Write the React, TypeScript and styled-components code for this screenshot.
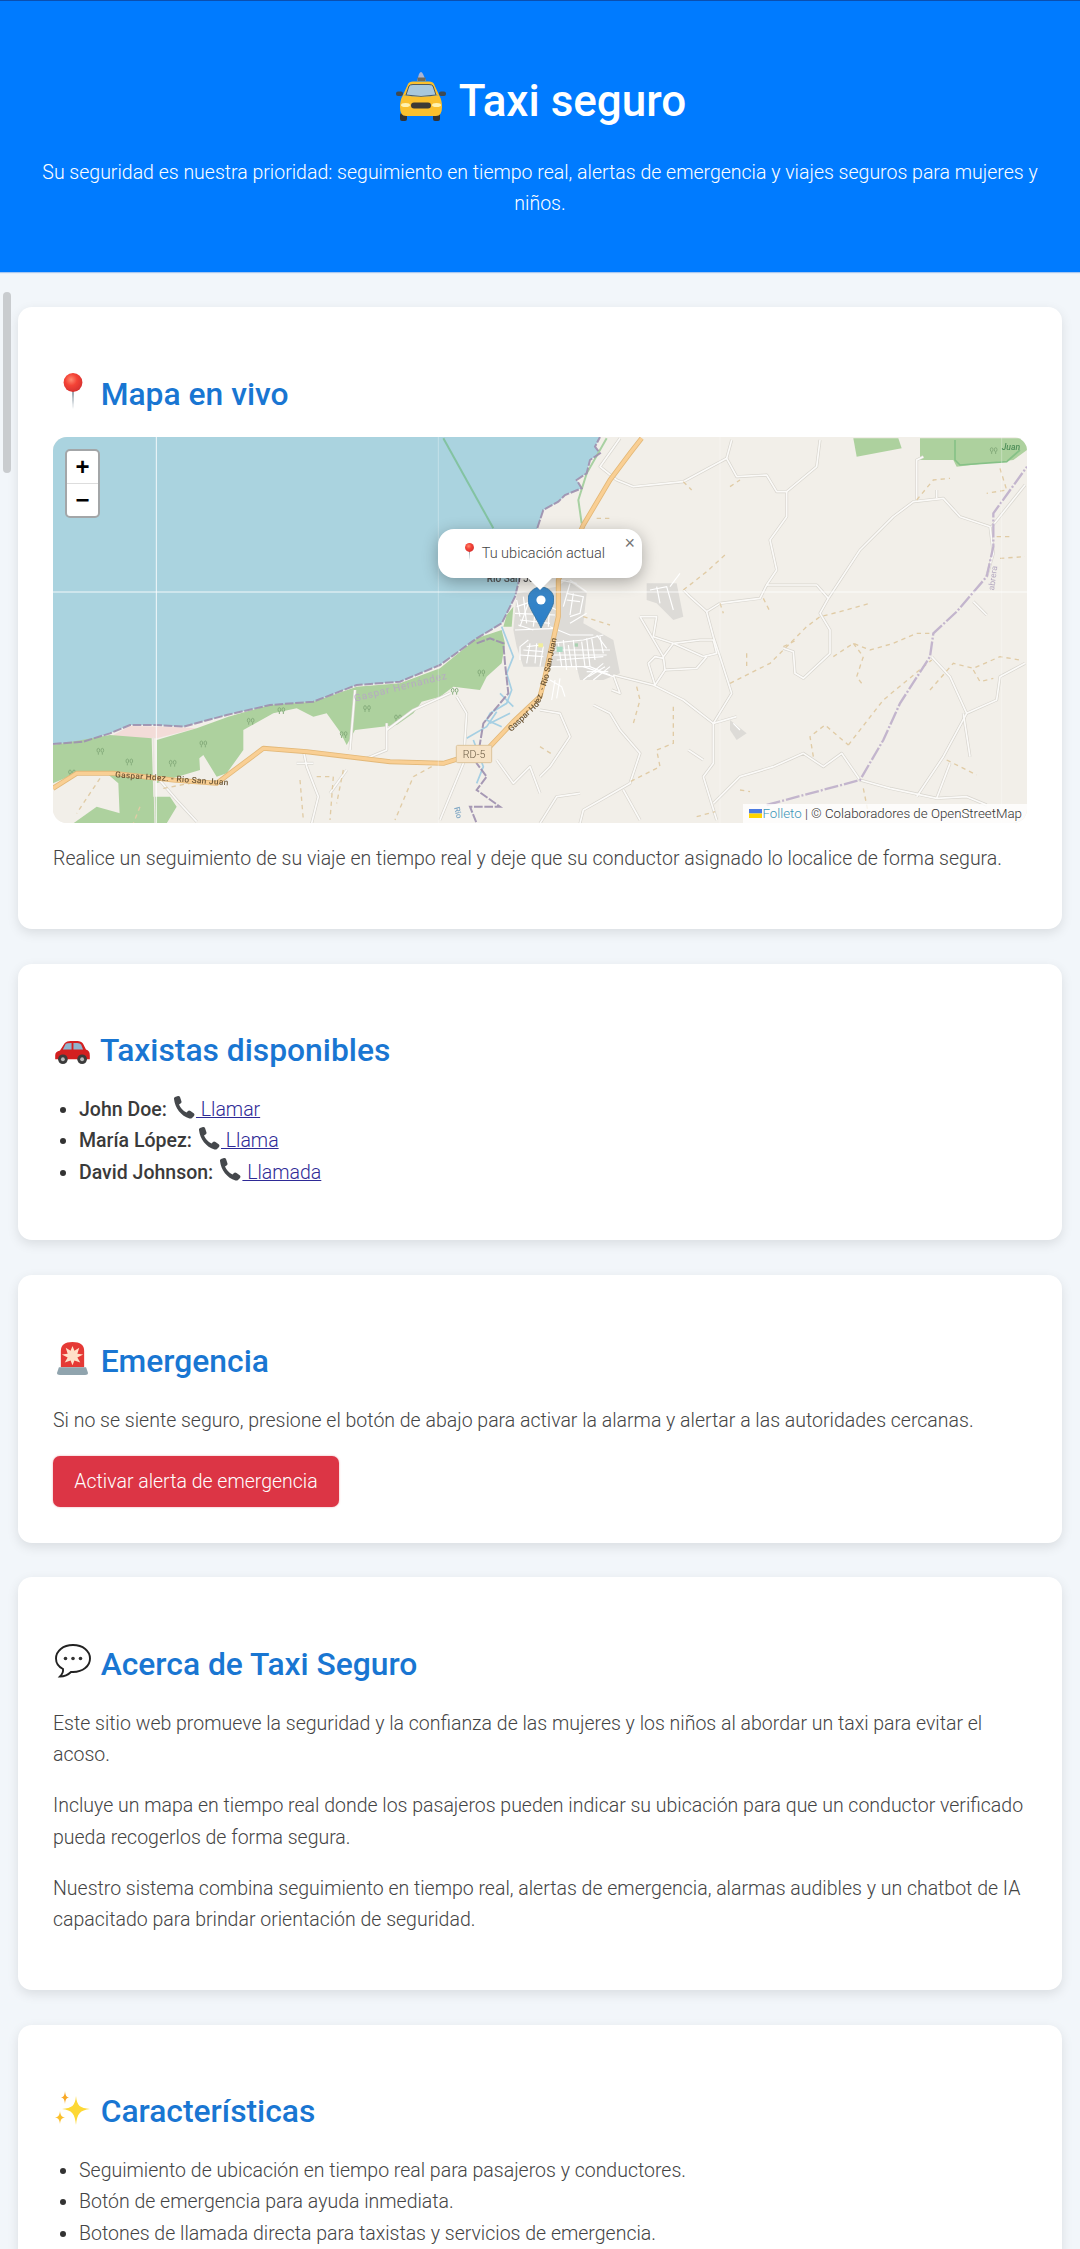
import React from "react";
import styled, { createGlobalStyle } from "styled-components";

const Global = createGlobalStyle`
  html, body { margin: 0; padding: 0; height: 2249px; overflow: hidden; background: #f2f6fa; }
  body { font-family: Roboto, "Liberation Sans", sans-serif; font-size: 19.5px; line-height: 31.4px; color: #555; font-weight: 300; }
  * { box-sizing: border-box; }
`;

const Page = styled.div`position: relative; width: 1080px; height: 2249px; overflow: hidden;`;
const Scrollbar = styled.div`position: absolute; left: 3px; top: 292px; width: 8px; height: 181px; border-radius: 4px; background: #c9cccf;`;
const Header = styled.header`
  height: 272px; background: #007bff; border-top: 1px solid #0a4fb0; color: #fff; text-align: center;
  padding: 72.5px 36px 0; box-shadow: 0 1px 1px rgba(120,170,235,.6);
`;
const Title = styled.h1`margin: 0 0 29px; font-size: 44px; line-height: 54px; font-weight: 500;`;
const Sub = styled.p`margin: 0; font-weight: 300; color: #fff;`;
const Main = styled.main`padding: 35px 18px 0; display: flex; flex-direction: column; gap: 34.6px;`;
const Card = styled.section`
  background: #fff; border-radius: 14px; padding: 35px; box-shadow: 0 4px 12px rgba(0,0,0,.1);
`;
const CardHeading = styled.h2`
  margin: 28.5px 0 19.9px; font-size: 31.8px; line-height: 47px; font-weight: 500; color: #1976d2;
`;
const Para = styled.p`margin: 0 0 19.6px; font-weight: 300; color: #444;`;
const MapBox = styled.div`position: relative; height: 386px; margin-bottom: 19.6px; border-radius: 14px; overflow: hidden; background: #f2efe9;`;
const MapArt = styled.svg`display: block; width: 974px; height: 386px; filter: blur(.7px);`;
const Zoom = styled.div`
  position: absolute; left: 12px; top: 12px; width: 35px; height: 69px; border: 2px solid #a3a6a8; border-radius: 5px;
  background: #fff; display: grid; grid-template-rows: 1fr 1fr;
`;
const ZoomBtn = styled.div<{ $first?: boolean }>`
  display: flex; align-items: center; justify-content: center; color: #000; font: 700 24px/1 "Liberation Sans", sans-serif;
  border-bottom: ${(p) => (p.$first ? "1px solid #ddd" : "0")};
`;
const Attribution = styled.div`
  position: absolute; right: 0; bottom: 0; height: 19px; padding: 0 5px 0 6px; background: rgba(255,255,255,.8);
  font-size: 13.3px; line-height: 19px; font-weight: 300; color: #333; display: flex; align-items: center; white-space: pre;
`;
const Flag = styled.svg`width: 13px; height: 9px; display: block;`;
const AttrLink = styled.span`color: #3a95b8;`;
const Popup = styled.div`
  position: absolute; left: 385px; top: 92px; width: 204px; height: 49px; background: #fff; border-radius: 16px;
  box-shadow: 0 4px 16px rgba(0,0,0,.3); font-size: 14.5px; line-height: 49px; color: #444; font-weight: 300; white-space: pre; padding-left: 23px;
  &::after { content: ""; position: absolute; left: 90px; top: 49px; border: 12.5px solid transparent; border-top-color: #fff; border-bottom: 0; }
`;
const Close = styled.span`position: absolute; right: 7px; top: 3px; font: 400 18px/22px "Liberation Sans", sans-serif; color: #757575;`;
const Marker = styled.svg`position: absolute; left: 475px; top: 150px; width: 26px; height: 41px; filter: blur(.3px);`;
const List = styled.ul`margin: 0 0 17px; padding: 0 0 0 26px;`;
const Item = styled.li<{ $strong?: boolean }>`
  color: ${(p) => (p.$strong ? "#333" : "#444")}; font-weight: 300;
  &::marker { color: #333; }
`;
const Name = styled.span`font-weight: 500; color: #3a3a3a;`;
const CallLink = styled.a`color: #2e2a96; text-decoration: underline; font-weight: 300;`;
const AlertButton = styled.button`
  display: block; height: 50.6px; width: 286px; margin: .4px 0 1px; padding: 0; border: 0; border-radius: 7px; background: #dc3545; color: #fff; font: 300 19.5px Roboto, sans-serif;
  box-shadow: 0 0 2px rgba(220,53,69,.5);
`;
const Glyph = styled.span<{ $w?: number }>`
  display: inline-flex; justify-content: center; width: ${(p) => p.$w ?? 1.25}em; height: 1em; vertical-align: -0.13em;
  & svg { display: block; flex: none; overflow: visible; }
`;

const Pin = ({ s = 36, id = "pb", up = 0 }: { s?: number; id?: string; up?: number }) => (
  <svg width={s} height={s} viewBox="0 0 36 36" style={{ marginTop: `${up}px` }}>
    <path d="M17 17 L18 36 L19 17Z" fill="#8a9aa5" />
    <defs><radialGradient id={id} cx=".4" cy=".35" r=".7"><stop offset="0" stopColor="#ff8a70" /><stop offset=".45" stopColor="#f44336" /><stop offset="1" stopColor="#d32f2f" /></radialGradient></defs>
    <circle cx="18" cy="9.5" r="9.4" fill={`url(#${id})`} />
  </svg>
);
const Taxi = () => (
  <svg width="50" height="50" viewBox="0 0 50 50" style={{ marginTop: "-5px" }}>
    <path d="M21 10 L23 3 Q25 -1 27 3 L30 10Z" fill="#a9b5d6" />
    <rect x="21.5" y="6.5" width="8" height="3.5" fill="#6f6a5a" />
    <path d="M12 13 Q13 10.5 17 10.5 L33 10.5 Q37 10.5 38 13 L43 24 L7 24Z" fill="#fbc02d" />
    <path d="M13 15 Q14 13.5 17 13.5 L33 13.5 Q36 13.5 37 15 L40 24 Q25 27 10 24Z" fill="#a9c8dc" stroke="#3f4f5c" strokeWidth=".9" />
    <rect x="0" y="20.5" width="7" height="4.5" rx="2" fill="#3f4a52" /><rect x="43" y="20.5" width="7" height="4.5" rx="2" fill="#3f4a52" />
    <rect x="4" y="42" width="7" height="8" rx="2" fill="#333" /><rect x="37" y="42" width="7" height="8" rx="2" fill="#333" />
    <path d="M7 24 Q25 27.5 43 24 Q46 29 46 36 Q46 45 40 45 L10 45 Q4 45 4 36 Q4 29 7 24Z" fill="#fbc02d" />
    <rect x="15" y="31.5" width="20" height="6" rx="3" fill="#3c3a36" />
    <ellipse cx="9.5" cy="34" rx="4.5" ry="2" fill="#fff2b0" /><ellipse cx="40.5" cy="34" rx="4.5" ry="2" fill="#fff2b0" />
  </svg>
);
const Car = () => (
  <svg width="37" height="25" viewBox="0 0 38 26" style={{ marginTop: "6px" }}>
    <path d="M1 16 Q1 12 6 11 L11 3 Q13 1 17 1 L24 1 Q28 1 30 4 L33 10 Q37 11 37 16 L37 20 L1 20Z" fill="#d32020" />
    <path d="M12 4 Q13 3 18 3 L18 10 L9 10Z" fill="#90b4cd" /><path d="M20 3 L24 3 Q27 3 28 5 L30 10 L20 10Z" fill="#90b4cd" />
    <circle cx="9" cy="20" r="5" fill="#3b3b3b" /><circle cx="9" cy="20" r="2" fill="#bbb" /><circle cx="29" cy="20" r="5" fill="#3b3b3b" /><circle cx="29" cy="20" r="2" fill="#bbb" />
  </svg>
);
const Siren = () => (
  <svg width="33" height="35" viewBox="0 0 34 36" style={{ marginTop: "-1px" }}>
    <path d="M5 27 L5 10 Q5 1 17 1 Q29 1 29 10 L29 27Z" fill="#e53935" />
    <path d="M17 5 L19 10 L24 7 L22 13 L28 14 L22 17 L25 22 L19 20 L17 25 L15 20 L9 22 L12 17 L6 14 L12 13 L10 7 L15 10Z" fill="#ffe0c8" />
    <path d="M3 27 L31 27 L33 33 Q33 35 30 35 L4 35 Q1 35 1 33Z" fill="#90a4ae" />
  </svg>
);
const Bubble = () => (
  <svg width="38" height="36" viewBox="0 0 38 36" style={{ marginTop: "0px" }}>
    <path d="M19 2 C9 2 2 8 2 15.5 C2 20 5 24 9 26 C9.5 29 8 31.5 6 33.5 C11 33.5 15 31 17 29 C18 29 18.5 29 19 29 C29 29 36 23 36 15.5 C36 8 29 2 19 2Z" fill="#fff" stroke="#222" strokeWidth="1.9" />
    <circle cx="11.5" cy="15.5" r="1.8" fill="#333" /><circle cx="19" cy="15.5" r="1.8" fill="#333" /><circle cx="26.5" cy="15.5" r="1.8" fill="#333" />
  </svg>
);
const Sparkles = () => (
  <svg width="38" height="36" viewBox="0 0 38 36" style={{ marginTop: "-1px" }}>
    <path d="M22 6 C23 16 26 18 36 19 C26 20 23 24 22 35 C21 24 18 20 8 19 C18 18 21 16 22 6Z" fill="#fdd835" />
    <path d="M11 1 C11.5 6 12.5 7 15 7.5 C12.5 8 11.5 9 11 14 C10.5 9 9.5 8 7 7.5 C9.5 7 10.5 6 11 1Z" fill="#f9a825" />
    <path d="M6 21 C6.5 26 8 27 11 27.5 C8 28 6.5 29 6 34 C5.5 29 4 28 1 27.5 C4 27 5.5 26 6 21Z" fill="#fbc02d" />
  </svg>
);
const Phone = () => (
  <svg width="24" height="24" viewBox="0 0 24 24" style={{ marginTop: "-1px" }}>
    <path d="M2 4 Q1.5 3 3 2 L6 1 Q7.5 .8 8 2 L9.5 6.5 Q9.7 8 8.5 8.5 L7 9.5 Q9 14.5 14.5 17.5 L16 16 Q17 15 18.5 16 L22 18.5 Q23 19.5 22 21 L20 23 Q19 23.8 17.5 23.5 C9 21 3 13 2 4Z" fill="#45484c" />
  </svg>
);

type Line = number[];
const toPath = (a: Line, dx = 0, dy = 0) => "M" + a.reduce<string[]>((o, v, i) => { if (i % 2 === 0) o.push(`${v + dx} ${a[i + 1] + dy}`); return o; }, []).join(" L");

const roadsZ3: Line[] = [
  [230,150,280,170,430,155,560,85,590,140,680,135,710,185,740,185,830,110,840,30],[560,85,575,30],[230,150,180,110,240,25],
  [740,185,740,260,690,330,710,420,680,465,660,505,540,520,500,545,450,500,430,480],
  [680,465,830,465,865,505,840,550,870,600,870,670,790,745,765,730,760,665,730,655],
  [865,505,960,360,1060,260,1120,215,1210,205,1260,260,1350,290,1360,370,1340,440],
  [500,545,520,620,540,680,575,790,520,880,520,1000,490,1040,530,1170],
  [220,735,340,765,430,810,520,880,590,860],[220,735,240,790,215,780],
  [300,560,350,560,340,620,400,640,480,630,520,630,530,670,490,680,400,640,370,680,375,720,345,765,325,700,345,680,370,685],[300,560,370,680],[375,720,470,715,500,680],
  [520,1120,600,1040,700,1010,790,970,850,1010,905,970,960,1050,1050,1075,1190,1105,1280,1100,1340,1125],
  [1175,680,1230,740,1280,850,1370,810,1380,740,1455,700],[1280,850,1210,980,1130,1100],[1190,1105,1230,1000],[1270,850,1290,980],
  [1130,210,1130,90,1150,80],[1190,180,1190,205],[1300,515,1340,555],[1355,290,1455,165],
  [160,825,210,850,240,900,300,970,270,1060,200,1100,130,1140,120,1180],[0,840,60,850,90,920,30,1010,0,1040],[445,960,490,990],[0,1180,50,1100,120,1090],[300,1170,250,1080],
];
const roadsZ2: Line[] = [
  [1250,800,1280,850,1270,1000,1200,1170],[1040,880,1040,960,980,985],[1230,790,1120,840,1040,900],[945,780,930,960],
  [770,1000,820,1000],[920,1020,870,1090],[350,1040,410,1110,470,1175],[1370,990,1420,1060,1470,1010,1500,1090],
  [790,960,800,1010,835,1100,815,1180],
];
const tracksZ3: Line[] = [
  [430,480,500,425,560,370],[430,155,455,180],[570,170,600,150],[540,520,550,550],[670,505,690,545],[1130,210,1180,150,1230,145],
  [570,760,690,700,800,590,840,560,900,545,990,520],[620,670,620,720],[730,650,770,630],[880,680,940,640,990,660,1060,640,1130,610,1180,610],
  [940,640,970,680,950,740,965,760],[1170,780,1240,700,1300,715,1380,680,1440,690],[820,980,810,920,855,885,925,945],[925,945,1030,810,1175,690],
  [1220,990,1310,1035],[290,770,300,810,280,880],[400,830,400,940,350,960,360,1010,270,1055],[1380,115,1400,180,1340,190],[1370,320,1410,320],[1380,385,1455,380],
  [1300,720,1320,755,1360,745],[170,265,215,265],[130,560,210,585],[0,950,40,975],[970,1075,985,1150],[470,1160,525,1145],[600,1080,630,1085],
];
const tracksZ2: Line[] = [
  [180,1045,110,1150],[830,1040,880,1040,870,1170],[1175,1010,1120,1040,1065,1170],[370,1075,450,1060],[780,1050,790,1170],[300,1130,280,1180],[910,1020,890,1120],
];
const townStreets: Line[] = [
  [140,140,200,120,260,150],[150,180,240,190],[135,210,260,205],[200,120,190,200],[160,110,170,190],[240,120,235,200],[290,100,340,110,330,160,300,170],[300,70,280,140],
  [150,285,220,290],[180,250,170,310],[200,250,195,310],[220,260,210,320],[240,250,340,240,400,225],[250,270,420,270],[260,300,400,290],[280,240,290,330],[310,240,320,330],[350,235,360,320],[380,225,410,265],
  [230,320,360,320,420,345],[340,360,400,310],[370,360,420,320],[340,320,430,350],[240,360,275,380,285,410],[255,360,245,420],[270,355,260,415],[300,190,350,160],[240,200,300,225,370,225],[150,300,150,260,175,240],
  [140,120,150,170],[180,115,150,200],[215,130,215,195],[135,160,255,165],[145,195,190,210],[170,260,215,255],[160,270,220,275],[245,285,410,285],[265,250,275,320],[295,255,305,320],[335,245,345,320],[365,235,375,300],[390,230,400,280],[350,335,415,335],[355,350,405,320],
  [290,120,330,125],[310,100,300,165],[270,60,320,70],[350,95,300,60],
];
const treesZ: number[][] = [[175,960],[262,992],[392,996],[90,1025],[484,938],[626,870],[718,838],[975,832],[1068,860],[905,910],[1318,725],[1238,780],[2855,58]];
const northCoast = "L1440 440 L1490 300 L1510 240 L1555 215 L1575 195 L1625 175 L1610 150 L1640 130 L1650 90 L1680 70 L1665 50 L1680 21";

const MapDrawing = () => (
  <MapArt viewBox="39 21 2922 1158" preserveAspectRatio="none" aria-hidden>
    <rect x="39" y="21" width="2922" height="1158" fill="#f2efe9" />
    <path d={`M39 21 L39 942 L130 935 L210 910 L270 885 L350 885 L430 890 L560 855 L690 825 L820 815 L950 765 L1080 755 L1200 705 L1310 625 L1385 580 L1425 500 ${northCoast}Z`} fill="#aad3df" />
    <path d="M220 915 L270 888 L420 892 L470 895 L350 925 L230 925Z" fill="#f3dcd8" />
    <g fill="#add19e">
      <path d="M39 945 L210 915 L335 925 L340 1100 L390 1100 L410 1130 L380 1180 L240 1180 L235 1060 L200 1030 L110 1030 L39 1060Z" />
      <path d="M100 1180 L170 1130 L240 1150 L240 1180Z" />
      <path d="M350 930 L470 895 L565 860 L690 825 L820 815 L950 770 L1080 760 L1200 715 L1310 625 L1385 600 L1395 640 L1385 700 L1340 740 L1320 780 L1240 770 L1200 800 L1145 815 L1120 850 L1070 885 L945 900 L920 945 L900 905 L860 850 L820 860 L770 835 L700 850 L610 900 L610 960 L560 1030 L530 1040 L490 975 L478 985 L480 1020 L380 1050 L350 1060Z" />
      <path d="M2440 25 L2575 25 L2585 55 L2450 80Z" /><path d="M2640 25 L2961 25 L2961 60 L2920 90 L2750 110 L2740 90 L2640 90Z" />
      <path d="M1400 555 L1420 530 L1415 590 L1390 590Z" />
    </g>
    <g fill="none" stroke="#86ad7c" strokeWidth="3">
      {treesZ.map(([x, y], i) => <path key={i} d={`M${x} ${y + 14} v-6 m-4 -7 a4 6 0 1 1 8 0 a4 6 0 1 1 -8 0 M${x + 12} ${y + 14} v-6 m-4 -7 a4 6 0 1 1 8 0 a4 6 0 1 1 -8 0`} />)}
    </g>
    <path d="M2745 30 L2745 90 L2760 105 L2900 95 L2940 60" fill="none" stroke="#86c187" strokeWidth="5" />
    <path d="M1210 25 L1360 295" stroke="#83c3a2" strokeWidth="6" fill="none" />
    <path d="M1700 25 L1640 130 L1615 210 L1625 280" stroke="#a8d1a2" strokeWidth="6" fill="none" />
    <g fill="#dddbd7">
      <path d="M1430 490 L1550 470 L1580 450 L1640 490 L1630 580 L1720 630 L1740 730 L1690 750 L1620 750 L1610 710 L1450 710 L1430 650 L1420 600Z" />
      <path d="M1820 460 L1910 460 L1930 560 L1900 570 L1850 520 L1820 510Z" /><path d="M2070 870 L2120 910 L2090 930 L2070 900Z" />
    </g>
    <g fill="none" stroke="#a5cfe3" strokeWidth="5">
      <path d="M1385 590 L1420 680 L1400 730 L1415 780 L1400 820 L1350 850 L1340 870 L1385 890" /><path d="M1280 925 L1340 890 L1370 845 M1300 930 L1330 1010 L1310 1060" />
      <path d="M1410 850 L1350 880 M1380 790 L1420 830" />
    </g>
    <g fill="none" stroke="#d8d5ce" strokeWidth="9" strokeLinejoin="round">
      {roadsZ3.map((l, i) => <path key={i} d={toPath(l, 1500)} />)}
      {roadsZ2.map((l, i) => <path key={i} d={toPath(l)} />)}
    </g>
    <g fill="none" stroke="#fbfaf8" strokeWidth="5" strokeLinejoin="round">
      {roadsZ3.map((l, i) => <path key={i} d={toPath(l, 1500)} />)}
      {roadsZ2.map((l, i) => <path key={i} d={toPath(l)} />)}
      <path d="M340 920 L345 1180" stroke="#e8e5df" strokeWidth="4" />
    </g>
    <g fill="none" stroke="#fff" strokeWidth="3.5">
      {townStreets.map((l, i) => <path key={i} d={toPath(l, 1290, 390)} />)}
      <path d="M1830 480 L1880 470 L1900 540 M1850 470 L1860 520 M1920 430 L1890 470 M2080 880 L2100 900" />
    </g>
    <g fill="none" stroke="#e0cba5" strokeWidth="4" strokeDasharray="13 12">
      {tracksZ3.map((l, i) => <path key={i} d={toPath(l, 1500)} />)}
      {tracksZ2.map((l, i) => <path key={i} d={toPath(l)} />)}
    </g>
    <path d="M1550 650 h18 v16 h-18z" fill="#a8dcc4" /><path d="M1604 640 h10 v10 h-10z" fill="#a8d0b0" /><path d="M1495 640 l14 0 l0 12 l-14 0z" fill="#f0ee9c" />
    <g fill="none" stroke="#9d8fae" strokeWidth="6" strokeDasharray="26 5" opacity=".9">
      <path d="M39 942 L130 935 L210 910 L270 885 L350 885 L430 890 L560 855 L690 825 L820 815 L950 765 L1080 755 L1200 705 L1310 625 L1385 580 L1425 500 L1440 440" />
      <path d={`M1440 440 ${northCoast}`} />
      <path d="M1310 640 L1350 625 L1390 640 L1395 700 L1405 790 L1330 880 L1310 1000 L1340 1040 L1310 1080 L1380 1130 L1290 1130 L1310 1180" />
    </g>
    <path d="M2180 1125 L2460 1050 L2530 930 L2580 820 L2670 680 L2680 610 L2750 545 L2840 440 L2860 350 L2860 250 L2961 110" fill="none" stroke="#c3b5cd" strokeWidth="7" strokeDasharray="42 6 6 6" />
    <path d="M39 1075 L110 1030 L220 1030 L400 1050 L530 1060 L670 955 L800 965 L1050 995 L1210 1000 L1340 960 L1420 875 L1500 800 L1515 740 L1555 560 L1555 450 L1630 285 L1710 150 L1770 70 L1805 25" fill="none" stroke="#e3b878" strokeWidth="15" strokeLinejoin="round" />
    <path d="M39 1075 L110 1030 L220 1030 L400 1050 L530 1060 L670 955 L800 965 L1050 995 L1210 1000 L1340 960 L1420 875 L1500 800 L1515 740 L1555 560 L1555 450 L1630 285 L1710 150 L1770 70 L1805 25" fill="none" stroke="#f9cf94" strokeWidth="10" strokeLinejoin="round" />
    <defs><path id="roadLabel" d="M1408 900 L1490 822 L1518 742 L1556 560" /></defs>
    <g fontFamily="Roboto, sans-serif" fontWeight="500">
      <text x="225" y="1042" fontSize="25" fill="#6c5636" transform="rotate(4 225 1042)" textLength="340">Gaspar Hdez. - Rio San Juan</text>
      <text x="945" y="815" fontSize="30" fill="#b6abc2" fontWeight="400" transform="rotate(-14 945 815)" textLength="285">Gaspar Hernández</text>
      <text fontSize="25" fill="#6c5636" dy="8"><textPath href="#roadLabel">Gaspar Hdez. - Rio San Juan</textPath></text>
      <text x="1340" y="455" fontSize="30" fill="#555">Rio San Juan</text>
      <text x="2885" y="60" fontSize="26" fill="#4f8f5a" fontStyle="italic">Juan</text>
      <text x="2862" y="482" fontSize="26" fill="#b6abc2" fontWeight="400" transform="rotate(-82 2862 482)">abrera</text>
      <text x="1290" y="1170" fontSize="24" fill="#7fa6c4" transform="rotate(75 1290 1120)">Rio</text>
    </g>
    <rect x="1249" y="946" width="106" height="52" rx="4" fill="#f6e3c7" stroke="#dcc49c" strokeWidth="3" />
    <text x="1302" y="983" fontSize="32" textAnchor="middle" fontFamily="Roboto, sans-serif" fill="#6b5c45">RD-5</text>
    <path d="M349 21 V1179 M39 486 H2961" stroke="#fff" strokeWidth="3" opacity=".85" fill="none" />
    <path d="M1195 21 V1179 M2040 21 V1179 M2885 21 V1179" stroke="#fff" strokeWidth="3" opacity=".3" fill="none" />
  </MapArt>
);

const App = () => (
  <Page>
    <Global />
    <Header>
      <Title><Glyph><Taxi /></Glyph> Taxi seguro</Title>
      <Sub>Su seguridad es nuestra prioridad: seguimiento en tiempo real, alertas de emergencia y viajes seguros para mujeres y niños.</Sub>
    </Header>
    <Main>
      <Card>
        <CardHeading><Glyph><Pin /></Glyph> Mapa en vivo</CardHeading>
        <MapBox>
          <MapDrawing />
          <Zoom><ZoomBtn $first>+</ZoomBtn><ZoomBtn>−</ZoomBtn></Zoom>
          <Marker viewBox="0 0 26 41">
            <defs><linearGradient id="mk" x1="0" y1="0" x2="0" y2="1"><stop offset="0" stopColor="#3a86c6" /><stop offset="1" stopColor="#2a7fc9" /></linearGradient></defs>
            <path d="M13 0 C5.8 0 0 5.6 0 12.6 C0 20 8.5 31 13 41 C17.5 31 26 20 26 12.6 C26 5.6 20.2 0 13 0Z" fill="url(#mk)" stroke="#2e6c97" strokeWidth=".8" />
            <circle cx="13" cy="13" r="4.6" fill="#fff" />
          </Marker>
          <Popup><Glyph $w={1.2}><Pin s={17} id="pb2" /></Glyph> Tu ubicación actual<Close>×</Close></Popup>
          <Attribution><Flag viewBox="0 0 13 9"><rect width="13" height="4.5" fill="#4c7be1" /><rect y="4.5" width="13" height="4.5" fill="#ffd500" /></Flag><AttrLink>Folleto</AttrLink> | © Colaboradores de OpenStreetMap</Attribution>
        </MapBox>
        <Para>Realice un seguimiento de su viaje en tiempo real y deje que su conductor asignado lo localice de forma segura.</Para>
      </Card>
      <Card>
        <CardHeading><Glyph><Car /></Glyph> Taxistas disponibles</CardHeading>
        <List>
          <Item $strong><Name>John Doe:</Name> <CallLink href="#"><Glyph><Phone /></Glyph> Llamar</CallLink></Item>
          <Item $strong><Name>María López:</Name> <CallLink href="#"><Glyph><Phone /></Glyph> Llama</CallLink></Item>
          <Item $strong><Name>David Johnson:</Name> <CallLink href="#"><Glyph><Phone /></Glyph> Llamada</CallLink></Item>
        </List>
      </Card>
      <Card>
        <CardHeading><Glyph><Siren /></Glyph> Emergencia</CardHeading>
        <Para>Si no se siente seguro, presione el botón de abajo para activar la alarma y alertar a las autoridades cercanas.</Para>
        <AlertButton>Activar alerta de emergencia</AlertButton>
      </Card>
      <Card>
        <CardHeading><Glyph><Bubble /></Glyph> Acerca de Taxi Seguro</CardHeading>
        <Para>Este sitio web promueve la seguridad y la confianza de las mujeres y los niños al abordar un taxi para evitar el acoso.</Para>
        <Para>Incluye un mapa en tiempo real donde los pasajeros pueden indicar su ubicación para que un conductor verificado pueda recogerlos de forma segura.</Para>
        <Para>Nuestro sistema combina seguimiento en tiempo real, alertas de emergencia, alarmas audibles y un chatbot de IA capacitado para brindar orientación de seguridad.</Para>
      </Card>
      <Card>
        <CardHeading><Glyph><Sparkles /></Glyph> Características</CardHeading>
        <List>
          <Item>Seguimiento de ubicación en tiempo real para pasajeros y conductores.</Item>
          <Item>Botón de emergencia para ayuda inmediata.</Item>
          <Item>Botones de llamada directa para taxistas y servicios de emergencia.</Item>
        </List>
      </Card>
    </Main>
    <Scrollbar />
  </Page>
);

export default App;
